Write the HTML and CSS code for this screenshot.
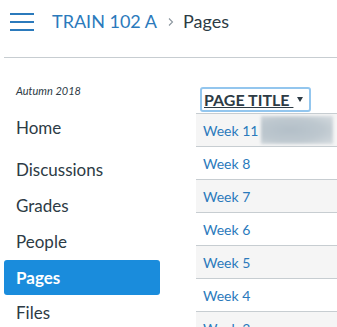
FILE: index.html
```html
<!DOCTYPE html>
<html lang="en">
<head>
<meta charset="utf-8">
<link rel="stylesheet" href="styles.css">
</head>
<body>
<header class="topbar">
  <div class="burger"><span></span><span></span><span></span></div>
  <nav class="crumbs">
    <span class="crumb-link">TRAIN 102 A</span>
    <svg class="chev" width="6" height="10" viewBox="0 0 6 10"><polyline points="1,1.5 4.5,5 1,8.5" fill="none" stroke="#8b969e" stroke-width="1.1"/></svg>
    <span class="crumb-current">Pages</span>
  </nav>
</header>
<main class="main">
  <aside class="sidebar">
    <div class="term">Autumn 2018</div>
    <ul class="nav">
      <li class="nav-item nav-home">Home</li>
      <li class="nav-item">Discussions</li>
      <li class="nav-item">Grades</li>
      <li class="nav-item">People</li>
      <li class="nav-item active">Pages</li>
      <li class="nav-item">Files</li>
    </ul>
  </aside>
  <section class="table">
    <div class="sort">
      <span class="sort-label">PAGE TITLE </span><span class="caret"></span>
    </div>
    <div class="row odd"><span class="link">Week 11</span><span class="blur"></span></div>
    <div class="row"><span class="link">Week 8</span></div>
    <div class="row odd"><span class="link">Week 7</span></div>
    <div class="row"><span class="link">Week 6</span></div>
    <div class="row odd"><span class="link">Week 5</span></div>
    <div class="row"><span class="link">Week 4</span></div>
    <div class="row odd"><span class="link">Week 3</span></div>
  </section>
</main>
</body>
</html>
```
FILE: styles.css
```css
html, body {
  margin: 0;
  padding: 0;
  background: #fff;
}
body {
  width: 337px;
  height: 327px;
  overflow: hidden;
  font-family: Lato, "Noto Sans", sans-serif;
  color: #2d3b45;
}
.topbar {
  display: flex;
  align-items: flex-start;
  height: 57px;
  margin-left: 4px;
  padding-left: 6px;
  border-bottom: 1px solid #c7cdd1;
}
.burger {
  display: flex;
  flex-direction: column;
  gap: 6px;
  width: 24px;
  margin-top: 13px;
}
.burger span {
  display: block;
  height: 2px;
  background: #2b7abc;
}
.crumbs {
  display: flex;
  align-items: center;
  margin-left: 18px;
  margin-top: 10px;
  font-size: 18px;
  line-height: 22px;
}
.crumb-link {
  color: #2b7abc;
}
.chev {
  margin: 2px 9px 0 11px;
}
.crumb-current {
  color: #2d3b45;
}
.main {
  display: grid;
  grid-template-columns: 196px 141px;
}
.sidebar {
  padding: 26px 0 0 4px;
}
.term {
  font-size: 11px;
  line-height: 14px;
  font-style: italic;
  padding-left: 12px;
  margin-bottom: 12px;
}
.nav {
  list-style: none;
  margin: 0;
  padding: 0;
}
.nav-item {
  width: 156px;
  box-sizing: border-box;
  height: 36px;
  line-height: 36px;
  font-size: 17px;
  padding-left: 12px;
  border-radius: 3px;
}
.nav-home {
  margin-bottom: 6px;
}
.nav-item.active {
  background: #1a8cdc;
  color: #fff;
  font-weight: 700;
  height: 35px;
}
.table {
  padding-top: 29px;
  min-width: 0;
}
.sort {
  display: flex;
  align-items: center;
  box-sizing: border-box;
  width: 111px;
  height: 25px;
  margin: 0 0 1px 4px;
  padding-left: 2px;
  border: 2px solid #93c6ee;
  border-radius: 3px;
}
.sort-label {
  font-size: 16px;
  line-height: 21px;
  font-weight: 700;
  text-decoration: underline;
  text-underline-offset: 1px;
  white-space: pre;
}
.caret {
  width: 0;
  height: 0;
  margin-left: 4px;
  border-left: 3px solid transparent;
  border-right: 3px solid transparent;
  border-top: 5px solid #2d3b45;
}
.row {
  display: flex;
  align-items: center;
  height: 32px;
  border-top: 1px solid #c7cdd1;
  padding-left: 7px;
  background: #fff;
  overflow: hidden;
}
.row.odd {
  background: #f5f5f5;
}
.link {
  font-size: 14px;
  color: #2b7abc;
  white-space: nowrap;
}
.blur {
  flex: none;
  margin-left: auto;
  margin-right: 4px;
  width: 72px;
  height: 28px;
  background: radial-gradient(ellipse at 40% 50%, #b3bfc8 0%, #bec8cf 55%, #d6dce0 100%);
  filter: blur(1.5px);
}
```
